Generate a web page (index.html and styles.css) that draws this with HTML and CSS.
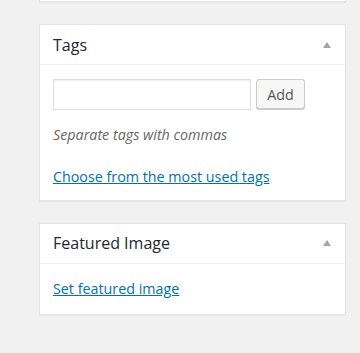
FILE: index.html
```html
<!DOCTYPE html>
<html lang="en">
<head>
    <meta charset="UTF-8">
    <meta name="viewport" content="width=device-width, initial-scale=1.0">
    <title>Post sidebar</title>
    <link rel="stylesheet" href="styles.css">
</head>
<body>
    <div class="sidebar">
        <div class="postbox stub"></div>

        <div class="postbox">
            <div class="hndle">
                <h3>Tags</h3>
                <span class="toggle"></span>
            </div>
            <div class="inside tags-inside">
                <div class="tag-row">
                    <input type="text" class="tag-input">
                    <button class="button">Add</button>
                </div>
                <p class="howto">Separate tags with commas</p>
                <p class="more"><a href="#">Choose from the most used tags</a></p>
            </div>
        </div>

        <div class="postbox">
            <div class="hndle">
                <h3>Featured Image</h3>
                <span class="toggle"></span>
            </div>
            <div class="inside featured-inside">
                <a href="#">Set featured image</a>
            </div>
        </div>
    </div>
</body>
</html>
```

FILE: styles.css
```css
body {
    font-family: 'Open Sans', 'Liberation Sans', sans-serif;
    font-size: 14.3px;
    line-height: 1.5;
    color: #444;
    background-color: #f1f1f1;
    margin: 0;
}

.sidebar {
    padding-left: 39px;
}

.postbox {
    width: 307px;
    box-sizing: border-box;
    background: white;
    border: 1px solid #e5e5e5;
    box-shadow: 0 1px 1px rgba(0, 0, 0, 0.04);
    margin-bottom: 22px;
}

.postbox.stub {
    height: 2px;
    border-top: none;
}

.hndle {
    height: 39px;
    display: flex;
    align-items: center;
    justify-content: space-between;
    padding: 0 14px 0 13px;
    border-bottom: 1px solid #eee;
}

.hndle h3 {
    margin: 0;
    font-size: 16px;
    font-weight: 400;
    color: #23282d;
}

.toggle {
    width: 0;
    height: 0;
    border-left: 4px solid transparent;
    border-right: 4px solid transparent;
    border-bottom: 6px solid #a0a5aa;
}

.inside {
    padding: 14px 13px 12px;
}

.featured-inside {
    padding: 14px 13px 15px;
}

.tag-row {
    display: flex;
    gap: 5px;
}

.tag-input {
    width: 198px;
    height: 31px;
    box-sizing: border-box;
    margin: 0;
    border: 1px solid #ddd;
    box-shadow: inset 0 1px 2px rgba(0, 0, 0, 0.07);
    font-family: inherit;
    font-size: 14.3px;
}

.button {
    width: 49px;
    height: 30px;
    box-sizing: border-box;
    padding: 0;
    background: #f7f7f7;
    border: 1px solid #ccc;
    border-radius: 3px;
    box-shadow: 0 1px 0 #ccc;
    color: #555;
    font-family: inherit;
    font-size: 14.3px;
}

.howto {
    margin: 14px 0 0;
    font-style: italic;
    color: #666;
}

.more {
    margin: 21px 0 0;
}

a {
    color: #0073aa;
}
```
